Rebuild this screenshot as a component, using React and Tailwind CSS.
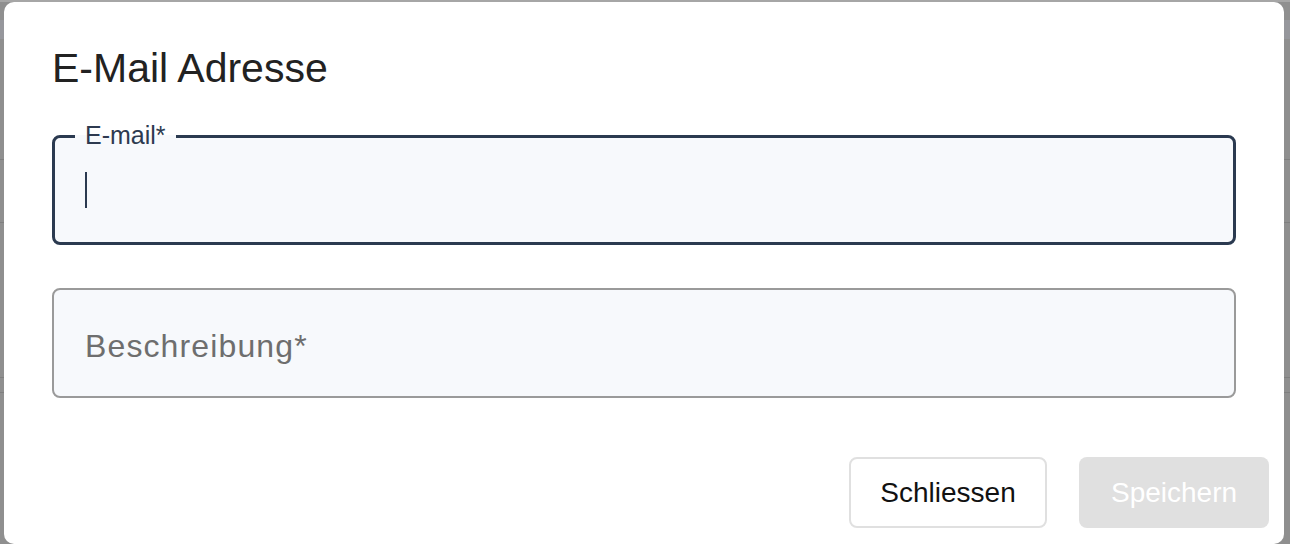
import React from 'react';

const font = { fontFamily: '"Liberation Sans", Arial, sans-serif' };

export default function App() {
  return (
    <div className="relative h-[544px] w-[1290px] overflow-hidden bg-[#8f8f8f]" style={font}>
      {/* page behind the overlay */}
      <div className="flex flex-col">
        <div className="h-[2px] bg-[#a6a6a6]" />
        <div className="mt-[18px] h-[19px] bg-[#96979c]" />
        <div className="mt-[120px] h-[1px] bg-[#7f7f7f]" />
        <div className="mt-[62px] h-[1px] bg-[#7f7f7f]" />
        <div className="mt-[154px] h-[1px] bg-[#7f7f7f]" />
        <div className="mt-[14px] h-[1px] bg-[#7f7f7f]" />
      </div>

      <div className="absolute left-[4px] top-[2px] flex h-[542px] w-[1280px] flex-col rounded-[10px] bg-white">
        <div className="px-[48px] pt-[42px]">
          <h2 className="text-[41px] leading-[48px] text-[#222222]">E-Mail Adresse</h2>

          <div className="relative mt-[43px] flex h-[110px] items-center rounded-[8px] border-[3px] border-[#2b3a50] bg-[#f7f9fc] pl-[30px]">
            <span className="absolute -top-[15px] left-[20px] bg-[linear-gradient(to_bottom,#ffffff_50%,#f7f9fc_50%)] px-[10px] text-[25px] leading-[24px] text-[#2d3a50]">
              E-mail*
            </span>
            <div className="h-[36px] w-[2px] bg-[#2b3a50]" />
          </div>

          <div className="mt-[43px] flex h-[110px] items-center rounded-[8px] border-2 border-[#9a9a9a] bg-[#f7f9fc] pl-[31px] pt-[5px]">
            <span className="text-[32px] tracking-[0.035em] text-[#6e6e6e]">Beschreibung*</span>
          </div>
        </div>

        <div className="mt-[59px] flex justify-end gap-[32px] pr-[15px]">
          <button className="h-[71px] w-[198px] rounded-[8px] border-2 border-[#e0e0e0] bg-white text-[28px] text-[#111111]">
            Schliessen
          </button>
          <button disabled className="h-[71px] w-[190px] rounded-[8px] bg-[#e0e0e0] text-[28px] text-white">
            Speichern
          </button>
        </div>
      </div>
    </div>
  );
}
